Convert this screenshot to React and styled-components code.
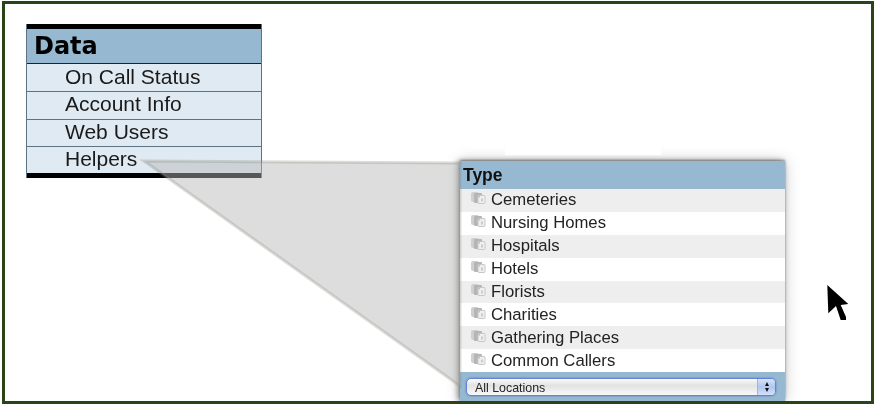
import React from 'react'
import styled, { createGlobalStyle } from 'styled-components'

const GlobalStyle = createGlobalStyle`
    html, body {
        margin: 0;
        padding: 0;
        background: #fff;
    }
`

const Frame = styled.div`
    position: relative;
    box-sizing: border-box;
    width: 872px;
    height: 403px;
    margin: 1px 0 0 2px;
    border: 3px solid #2b4417;
    display: flex;
    align-items: flex-start;
    overflow: hidden;
    filter: blur(0.4px);
`

const Menu = styled.div`
    box-sizing: border-box;
    flex: none;
    width: 236px;
    margin: 20px 0 0 21px;
    border: solid #5d7283;
    border-width: 0 1px;
    background: #e0eaf2;
`

const MenuCap = styled.div`
    height: 5px;
    background: #000;
`

const MenuTitle = styled.div`
    height: 34px;
    padding-left: 7px;
    background: #96b8d0;
    border-bottom: 1px solid #222;
    font: bold 24px/35px 'DejaVu Sans', sans-serif;
    color: #000;
`

const MenuRow = styled.div`
    box-sizing: border-box;
    height: 27.25px;
    padding: ${(props) => (props.first ? '1px' : '0')} 0 0 38px;
    border-top: ${(props) => (props.first ? 'none' : '1px solid #5d7283')};
    font: 21px/24px 'Liberation Sans', Arial, sans-serif;
    color: #1a1a1a;
`

const Panel = styled.div`
    flex: none;
    width: 325px;
    margin: 157px 0 0 198px;
    background: #fff;
    box-shadow: -2px 0 6px rgba(0, 0, 0, 0.45), 0 -1px 2px rgba(0, 0, 0, 0.35), 0 0 14px rgba(0, 0, 0, 0.22);
    position: relative;

    &::before {
        content: '';
        position: absolute;
        top: -24px;
        left: 45px;
        width: 156px;
        height: 18px;
        background: #fff;
    }
`

const PanelTitle = styled.div`
    height: 28px;
    padding-left: 3px;
    background: #96b8d0;
    font: bold 17.5px/28px 'Liberation Sans', Arial, sans-serif;
    color: #111;
`

const TypeRow = styled.div`
    display: flex;
    align-items: center;
    height: 22.9px;
    padding-left: 10px;
    background: ${(props) => (props.shaded ? '#eeeeee' : '#ffffff')};
    font: 16.7px/21px 'Liberation Sans', Arial, sans-serif;
    color: #222;
`

const RowLabel = styled.span`
    margin-top: -1px;
`

const RowIcon = styled.svg`
    flex: none;
    width: 17px;
    height: 15px;
    margin: -3px 4px 0 0;
`

const SelectBar = styled.div`
    height: 29px;
    box-sizing: border-box;
    padding: 6px 9px 0 6px;
    background: #96b8d0;
`

const Select = styled.div`
    position: relative;
    box-sizing: border-box;
    height: 18px;
    padding-left: 8px;
    border: 1px solid #6384d6;
    border-radius: 5px;
    background: linear-gradient(#fbfbfb 0%, #e2e2e2 40%, #f8f8f8 100%);
    box-shadow: 0 0 2px #4f78c8;
    font: 12.4px/18px 'Liberation Sans', Arial, sans-serif;
    color: #222;
    overflow: hidden;
`

const Stepper = styled.div`
    position: absolute;
    top: 0;
    right: 0;
    bottom: 0;
    width: 17px;
    display: flex;
    flex-direction: column;
    align-items: center;
    justify-content: center;
    gap: 2px;
    border-left: 1px solid #9db4e6;
    background: linear-gradient(#d6e2f8, #b0c6f0 50%, #d4e0f8);
`

const Arrow = styled.span`
    width: 0;
    height: 0;
    border-left: 2.5px solid transparent;
    border-right: 2.5px solid transparent;
    border-${(props) => (props.up ? 'bottom' : 'top')}: 4px solid #111;
`

const Callout = styled.svg`
    position: absolute;
    left: -5px;
    top: -4px;
    width: 875px;
    height: 406px;
    pointer-events: none;
`

const Cursor = styled.svg`
    position: absolute;
    left: 821px;
    top: 280px;
    width: 25px;
    height: 38px;
`

const types = [
    'Cemeteries',
    'Nursing Homes',
    'Hospitals',
    'Hotels',
    'Florists',
    'Charities',
    'Gathering Places',
    'Common Callers',
]

const StackIcon = () => (
    <RowIcon viewBox="0 0 17 15">
        <rect x="1" y="1" width="8" height="10" rx="2" fill="#cfcfcf" />
        <rect x="4" y="2" width="8" height="10" rx="1" fill="#b5b5b5" />
        <rect x="8" y="4.5" width="7" height="8" rx="1" fill="#efefef" stroke="#c8c8c8" />
        <rect x="11" y="7.5" width="2" height="3" fill="#cccccc" />
        <rect x="8.5" y="5" width="1.5" height="1.5" fill="#a8cfa8" />
    </RowIcon>
)

export default function App() {
    return (
        <>
            <GlobalStyle />
            <Frame>
                <Menu>
                    <MenuCap />
                    <MenuTitle>Data</MenuTitle>
                    <MenuRow first>On Call Status</MenuRow>
                    <MenuRow>Account Info</MenuRow>
                    <MenuRow>Web Users</MenuRow>
                    <MenuRow>Helpers</MenuRow>
                    <MenuCap />
                </Menu>
                <Panel>
                    <PanelTitle>Type</PanelTitle>
                    {types.map((name, i) => (
                        <TypeRow key={name} shaded={i % 2 === 0}>
                            <StackIcon />
                            <RowLabel>{name}</RowLabel>
                        </TypeRow>
                    ))}
                    <SelectBar>
                        <Select>
                            All Locations
                            <Stepper>
                                <Arrow up />
                                <Arrow />
                            </Stepper>
                        </Select>
                    </SelectBar>
                </Panel>
                <Callout viewBox="0 0 875 406">
                    <polygon
                        points="144,161 460,163 460,386"
                        fill="rgba(182,182,182,0.47)"
                        stroke="rgba(140,140,130,0.3)"
                        strokeWidth="3"
                    />
                </Callout>
                <Cursor viewBox="0 0 25 38">
                    <path
                        d="M1.3 1 L2.3 29.3 L10 22 L14.7 36 L20 36 L20 33 L14.7 21 L22.3 20 Z"
                        fill="#000"
                    />
                </Cursor>
            </Frame>
        </>
    )
}
